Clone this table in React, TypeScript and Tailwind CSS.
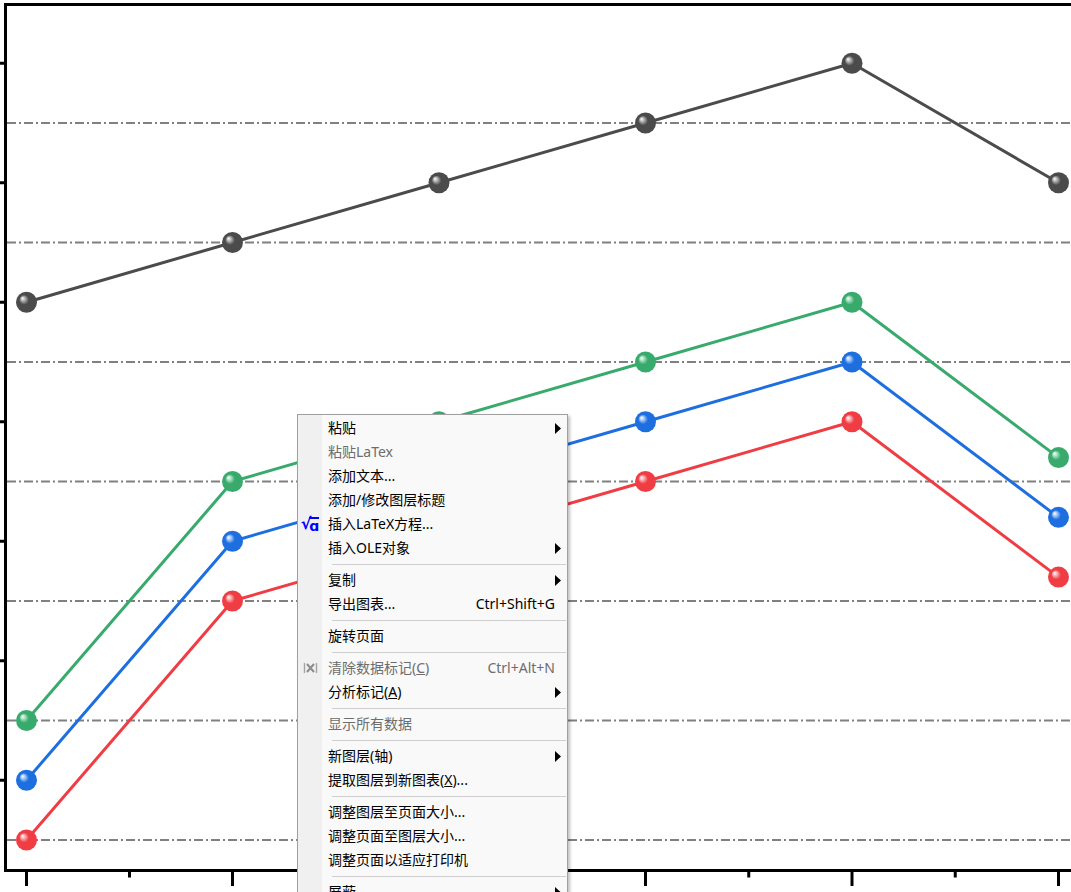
import * as React from 'react';

// ─── Chart data ───────────────────────────────────────────────────────────────

const XS = [26.5, 232.5, 439, 645.5, 852, 1058.5];
const yOf = (k: number) => 840 - 59.75 * k;

const SERIES = [
  { id: 'gray', color: '#4b4b4b', light: '#bdbdbd', values: [9, 10, 11, 12, 13, 11] },
  { id: 'green', color: '#38aa6c', light: '#b5e6c9', values: [2, 6, 7, 8, 9, 6.4] },
  { id: 'blue', color: '#1d6fe0', light: '#b3d0fb', values: [1, 5, 6, 7, 8, 5.4] },
  { id: 'red', color: '#f03d44', light: '#fbbcbe', values: [0, 4, 5, 6, 7, 4.4] },
];

const GRID_K = [0, 2, 4, 6, 8, 10, 12];
const TICK_K = [1, 3, 5, 7, 9, 11, 13];

function Chart() {
  return (
    <svg width={1071} height={892} viewBox="0 0 1071 892" className="block">
      <defs>
        {SERIES.map((s) => (
          <radialGradient key={s.id} id={`ball-${s.id}`} cx="0.5" cy="0.5" r="0.55" fx="0.3" fy="0.3">
            <stop offset="0" stopColor="#ffffff" />
            <stop offset="0.16" stopColor={s.light} />
            <stop offset="0.42" stopColor={s.color} />
            <stop offset="1" stopColor={s.color} />
          </radialGradient>
        ))}
      </defs>

      {/* grid */}
      {GRID_K.map((k) => (
        <line
          key={k}
          x1={7}
          x2={1071}
          y1={yOf(k)}
          y2={yOf(k)}
          stroke="#808080"
          strokeWidth={2}
          strokeDasharray="9 3 2 3"
        />
      ))}

      {/* axes */}
      <line x1={5.5} x2={5.5} y1={3} y2={872} stroke="#000" strokeWidth={3} />
      <line x1={4} x2={1071} y1={4.5} y2={4.5} stroke="#000" strokeWidth={3} />
      <line x1={4} x2={1071} y1={870.5} y2={870.5} stroke="#000" strokeWidth={3} />
      {TICK_K.map((k) => (
        <line key={k} x1={0} x2={5} y1={yOf(k)} y2={yOf(k)} stroke="#000" strokeWidth={3} />
      ))}
      {XS.map((x) => (
        <line key={x} x1={x} x2={x} y1={870} y2={886} stroke="#000" strokeWidth={3} />
      ))}
      {XS.slice(0, -1).map((x, i) => {
        const mx = (x + XS[i + 1]) / 2;
        return <line key={mx} x1={mx} x2={mx} y1={870} y2={877.5} stroke="#000" strokeWidth={3} />;
      })}

      {/* series */}
      {SERIES.map((s) => (
        <g key={s.id}>
          <polyline
            points={s.values.map((v, i) => `${XS[i]},${yOf(v)}`).join(' ')}
            fill="none"
            stroke={s.color}
            strokeWidth={3}
            strokeLinejoin="round"
          />
          {s.values.map((v, i) => (
            <circle key={i} cx={XS[i]} cy={yOf(v)} r={10.5} fill={`url(#ball-${s.id})`} />
          ))}
        </g>
      ))}
    </svg>
  );
}

// ─── Context menu ─────────────────────────────────────────────────────────────

type MenuItem =
  | 'sep'
  | {
      label: React.ReactNode;
      disabled?: boolean;
      arrow?: boolean;
      shortcut?: string;
      icon?: 'latex' | 'clear';
    };

const MENU: MenuItem[] = [
  { label: '粘贴', arrow: true },
  { label: '粘贴LaTex', disabled: true },
  { label: '添加文本...' },
  { label: '添加/修改图层标题' },
  { label: '插入LaTeX方程...', icon: 'latex' },
  { label: '插入OLE对象', arrow: true },
  'sep',
  { label: '复制', arrow: true },
  { label: '导出图表...', shortcut: 'Ctrl+Shift+G' },
  'sep',
  { label: '旋转页面' },
  'sep',
  {
    label: (
      <>
        清除数据标记(<u>C</u>)
      </>
    ),
    disabled: true,
    shortcut: 'Ctrl+Alt+N',
    icon: 'clear',
  },
  {
    label: (
      <>
        分析标记(<u>A</u>)
      </>
    ),
    arrow: true,
  },
  'sep',
  { label: '显示所有数据', disabled: true },
  'sep',
  { label: '新图层(轴)', arrow: true },
  {
    label: (
      <>
        提取图层到新图表(<u>X</u>)...
      </>
    ),
  },
  'sep',
  { label: '调整图层至页面大小...' },
  { label: '调整页面至图层大小...' },
  { label: '调整页面以适应打印机' },
  'sep',
  { label: '屏蔽', arrow: true },
];

function MenuIcon({ kind }: { kind?: 'latex' | 'clear' }) {
  if (kind === 'latex') {
    return (
      <span className="flex items-start font-['DejaVu_Sans',sans-serif] text-[16px] leading-none font-bold text-[#0000ff]">
        <span className="-mr-[2px]">√</span>
        <span className="mt-[1px] border-t-2 border-[#0000ff] text-[14px] leading-[14px]">ɑ</span>
      </span>
    );
  }
  if (kind === 'clear') {
    return (
      <svg width="15" height="14" viewBox="0 0 15 14">
        <path d="M1.5 2v10M13.5 2v10" stroke="#a3a3a3" strokeWidth="1.4" />
        <path d="M4 3l7 8M11 3l-7 8" stroke="#8c8c8c" strokeWidth="2" />
      </svg>
    );
  }
  return null;
}

function ContextMenu() {
  return (
    <div className="absolute top-[414px] left-[297px] w-[271px] border border-[#a0a0a0] bg-[#f9f9f9] pt-[1px] shadow-[2px_2px_3px_rgba(0,0,0,0.25)] font-['Noto_Sans','Noto_Sans_CJK_SC',sans-serif] text-[14px]">
      {/* icon gutter */}
      <div className="absolute top-0 bottom-0 left-0 w-[24px] bg-[#f0f0f0]" />
      <div className="relative flex flex-col">
        {MENU.map((item, i) =>
          item === 'sep' ? (
            <div key={i} className="flex h-[8px] items-center pr-[1px] pl-[34px]">
              <div className="h-px w-full bg-[#cfcfcf]" />
            </div>
          ) : (
            <div
              key={i}
              className={`flex h-[24px] items-center ${item.disabled ? 'text-[#6d6d6d]' : 'text-black'}`}
            >
              <div className="flex w-[24px] shrink-0 items-center justify-center">
                <MenuIcon kind={item.icon} />
              </div>
              <span className="ml-[6px] flex-1 leading-[24px] whitespace-nowrap">{item.label}</span>
              {item.shortcut && <span className="mr-[12px] leading-[24px]">{item.shortcut}</span>}
              {item.arrow && (
                <svg width="6" height="11" viewBox="0 0 6 11" className="mr-[6px]">
                  <path d="M0 0L6 5.5L0 11Z" fill="#000" />
                </svg>
              )}
            </div>
          ),
        )}
      </div>
    </div>
  );
}

// ─── App ──────────────────────────────────────────────────────────────────────

export default function App() {
  return (
    <div className="relative h-[892px] w-[1071px] overflow-hidden bg-white">
      <Chart />
      <ContextMenu />
    </div>
  );
}
